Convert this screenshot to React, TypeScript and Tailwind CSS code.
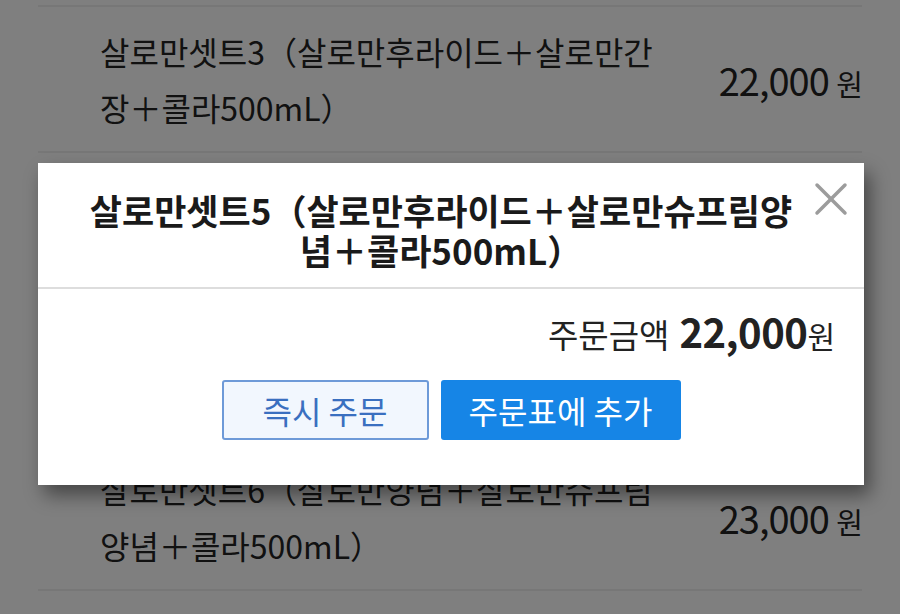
import React from 'react';

const rows = [
  { lines: ['살로만셋트3（살로만후라이드＋살로만간', '장＋콜라500mL）'], price: '22,000' },
  { lines: ['살로만셋트4（살로만후라이드＋살로만양', '념＋콜라500mL）'], price: '22,000' },
  { lines: ['살로만셋트5（살로만후라이드＋살로만슈', '프림양념＋콜라500mL）'], price: '22,000' },
  { lines: ['살로만셋트6（살로만양념＋살로만슈프림', '양념＋콜라500mL）'], price: '23,000' },
];

const font = { fontFamily: '"Noto Sans CJK KR", "Noto Sans", sans-serif' };

export default function App() {
  return (
    <div className="relative w-[900px] h-[614px] overflow-hidden bg-white" style={font}>
      <div className="mx-[38px] mt-[5px] border-t-2 border-[#eeeeee]">
        {rows.map((r, i) => (
          <div key={i} className="h-[146px] border-b-2 border-[#eeeeee] flex items-center pl-[62px] pr-0">
            <div className="flex-1 text-[32px] leading-[56px] text-[#222] whitespace-nowrap">
              {r.lines[0]}
              <br />
              {r.lines[1]}
            </div>
            <div className="text-[38px] text-[#222] tracking-[-1px] whitespace-nowrap">
              {r.price} <span className="text-[29px]">원</span>
            </div>
          </div>
        ))}
      </div>

      <div className="absolute inset-0 bg-black/50" />

      <div className="absolute left-[38px] top-[163px] w-[826px] bg-white shadow-[6px_10px_18px_rgba(0,0,0,0.45)]">
        <div className="relative pt-[27px] pb-[17px] pl-[30px] pr-[50px] border-b-2 border-[#dddddd]">
          <h2 className="text-center text-[35px] leading-[40px] font-bold text-[#1a1a1a] whitespace-nowrap">
            살로만셋트5（살로만후라이드＋살로만슈프림양
            <br />
            념＋콜라500mL）
          </h2>
          <button className="absolute right-[15px] top-[18px] w-[36px] h-[36px] flex items-center justify-center">
            <svg width="34" height="34" viewBox="0 0 34 34" fill="none" stroke="#9c9c9c" strokeWidth="3.5" strokeLinecap="round">
              <path d="M3 3 L31 31" />
              <path d="M31 3 L3 31" />
            </svg>
          </button>
        </div>

        <div className="pt-[22px] pb-[45px] px-[29px]">
          <div className="h-[40px] flex items-baseline justify-end text-[#222] leading-[40px]">
            <span className="text-[33px] leading-[40px] mr-[10px]">주문금액</span>
            <span className="text-[40px] leading-[40px] font-bold tracking-[-0.5px]">22,000</span>
            <span className="text-[30px] leading-[40px]">원</span>
          </div>
          <div className="mt-[29px] flex justify-center gap-[12px]">
            <button className="w-[207px] h-[60px] rounded-[3px] border-2 border-[#6e9ad8] bg-[#f2f7fe] text-[#3a6fc0] text-[32px] leading-[56px]">
              즉시 주문
            </button>
            <button className="w-[240px] h-[60px] rounded-[3px] bg-[#1685e6] text-white text-[32px] leading-[60px]">
              주문표에 추가
            </button>
          </div>
        </div>
      </div>
    </div>
  );
}
